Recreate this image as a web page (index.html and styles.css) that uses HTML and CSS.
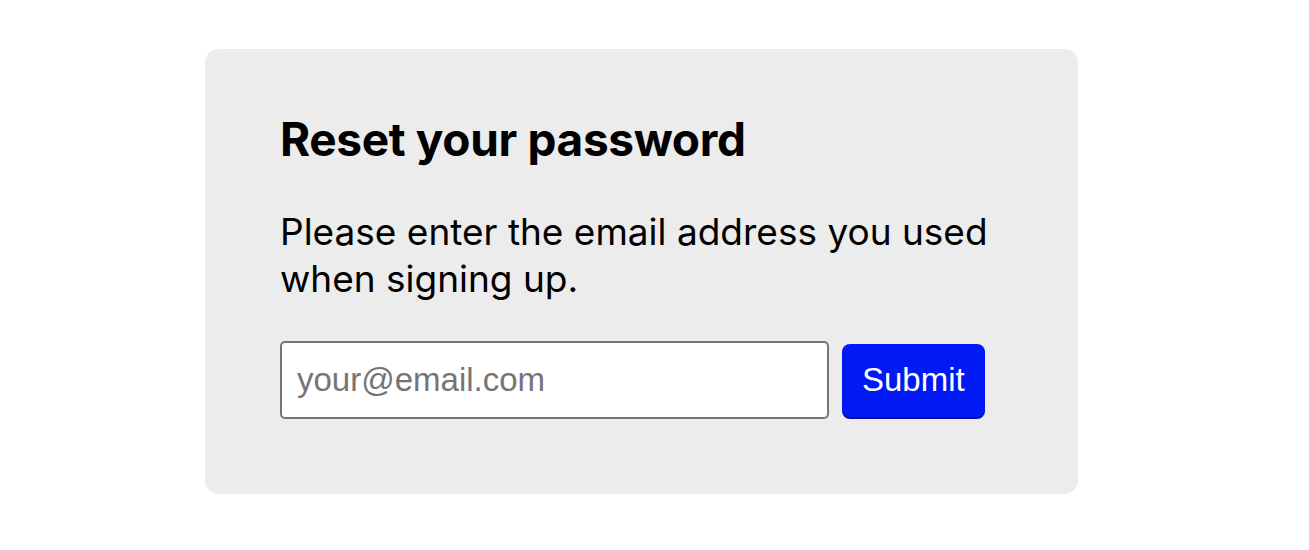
FILE: index.html
```html
<!DOCTYPE html>
<html>
<head>
<meta charset="utf-8">
<link rel="stylesheet" href="styles.css">
</head>
<body>
<div class="page">
  <div class="card">
    <h1 class="title">Reset your password</h1>
    <p class="desc">Please enter the email address you used when signing up.</p>
    <form class="row">
      <input class="email" type="email" placeholder="your@email.com">
      <button class="submit" type="button">Submit</button>
    </form>
  </div>
</div>
</body>
</html>
```
FILE: styles.css
```css
html, body {
  margin: 0;
  padding: 0;
  background: #fff;
}
.page {
  padding: 49px 0 0 205px;
}
.card {
  width: 873px;
  height: 445px;
  box-sizing: border-box;
  background: #ececec;
  border-radius: 14px;
  padding: 64px 75px 0 75px;
  font-family: Inter, "Liberation Sans", sans-serif;
  color: #000;
}
.title {
  margin: 0;
  font-size: 46px;
  font-weight: 700;
  line-height: 52px;
  letter-spacing: -0.35px;
}
.desc {
  margin: 43px 0 0 0;
  width: 720px;
  font-size: 37px;
  font-weight: 400;
  line-height: 47px;
}
.row {
  display: flex;
  align-items: center;
  gap: 13px;
  margin-top: 39px;
}
.email {
  width: 549px;
  height: 78px;
  box-sizing: border-box;
  border: 2px solid #767676;
  border-radius: 5px;
  background: #fff;
  padding: 0 15px;
  font-family: "Liberation Sans", Arial, sans-serif;
  font-size: 33px;
}
.email::placeholder {
  color: #757575;
}
.submit {
  height: 73px;
  padding: 0 20px;
  border: none;
  border-radius: 8px;
  background: #0019f5;
  color: #fff;
  font-family: "Liberation Sans", Arial, sans-serif;
  font-size: 33px;
  box-shadow: 0 2px 0 #0010a0;
}
```
